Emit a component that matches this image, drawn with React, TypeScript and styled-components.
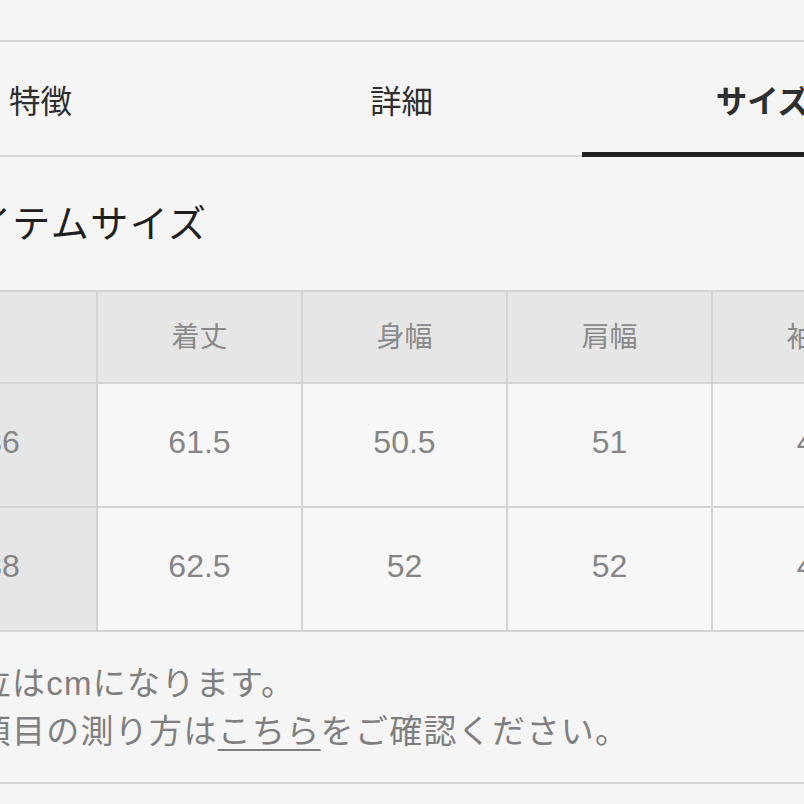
import React from "react";
import styled, { createGlobalStyle } from "styled-components";

const Global = createGlobalStyle`
  html, body {
    margin: 0;
    padding: 0;
    background: #f5f5f5;
    overflow: hidden;
  }
  body {
    font-family: "Liberation Sans", "Noto Sans CJK JP", sans-serif;
  }
`;

const Page = styled.div`
  width: 1083px;
  margin-left: -140px;
  padding-top: 40px;
`;

const TabBar = styled.div`
  display: flex;
  height: 113px;
  border-top: 2px solid #d6d6d6;
  border-bottom: 2px solid #d9d9d9;
`;

const Tab = styled.div<{ $active?: boolean }>`
  flex: 1;
  display: flex;
  align-items: center;
  justify-content: center;
  position: relative;
  font-size: 31.5px;
  color: #2e2e2e;
  font-weight: ${(p) => (p.$active ? 700 : 400)};
  &::after {
    content: "";
    display: ${(p) => (p.$active ? "block" : "none")};
    position: absolute;
    left: 0;
    right: 0;
    bottom: -2px;
    height: 5px;
    background: #222;
  }
`;

const Content = styled.div`
  padding-left: 52px;
`;

const Heading = styled.h2`
  margin: 43px 0 42px 24px;
  font-size: 38px;
  letter-spacing: 1.5px;
  line-height: 48px;
  font-weight: 400;
  color: #1f1f1f;
`;

const Table = styled.div`
  display: grid;
  grid-template-columns: 182px repeat(5, 203px);
  grid-template-rows: 90px 122px 122px;
  gap: 2px;
  padding: 2px;
  background: #d4d4d4;
  width: max-content;
`;

const Cell = styled.div<{ $head?: boolean }>`
  display: flex;
  align-items: center;
  justify-content: center;
  padding-bottom: 5px;
  background: ${(p) => (p.$head ? "#e6e6e6" : "#f7f7f7")};
  color: #858585;
  font-size: 32px;
`;

const SizeCell = styled(Cell)`
  padding-right: 6px;
`;

const HeadCell = styled(Cell)`
  font-size: 28px;
  color: #8a8a8a;
`;

const Footnote = styled.div`
  margin-top: 28px;
  margin-left: -3px;
  padding-bottom: 26px;
  border-bottom: 2px solid #d6d6d6;
  font-size: 33px;
  letter-spacing: 1.3px;
  line-height: 48px;
  color: #7f7f7f;
`;

const NoteLine = styled.p`
  margin: 0;
  white-space: nowrap;
`;

const Link = styled.a`
  color: inherit;
  text-decoration: underline;
  text-decoration-thickness: 2px;
  text-underline-offset: 6px;
`;

const heads = ["着丈", "身幅", "肩幅", "袖丈", "総丈"];
const rows = [
  { size: "36", values: ["61.5", "50.5", "51", "46", "78"] },
  { size: "38", values: ["62.5", "52", "52", "47", "79"] },
];

export default function App() {
  return (
    <>
      <Global />
      <Page>
        <TabBar>
          <Tab>特徴</Tab>
          <Tab>詳細</Tab>
          <Tab $active>サイズ</Tab>
        </TabBar>
        <Content>
          <Heading>アイテムサイズ</Heading>
          <Table>
            <Cell $head />
            {heads.map((h) => (
              <HeadCell $head key={h}>
                {h}
              </HeadCell>
            ))}
            {rows.map((r) => (
              <React.Fragment key={r.size}>
                <SizeCell $head>{r.size}</SizeCell>
                {r.values.map((v, i) => (
                  <Cell key={i}>{v}</Cell>
                ))}
              </React.Fragment>
            ))}
          </Table>
          <Footnote>
            <NoteLine>※単位はcmになります。</NoteLine>
            <NoteLine>
              ※各項目の測り方は<Link href="#">こちら</Link>をご確認ください。
            </NoteLine>
          </Footnote>
        </Content>
      </Page>
    </>
  );
}
